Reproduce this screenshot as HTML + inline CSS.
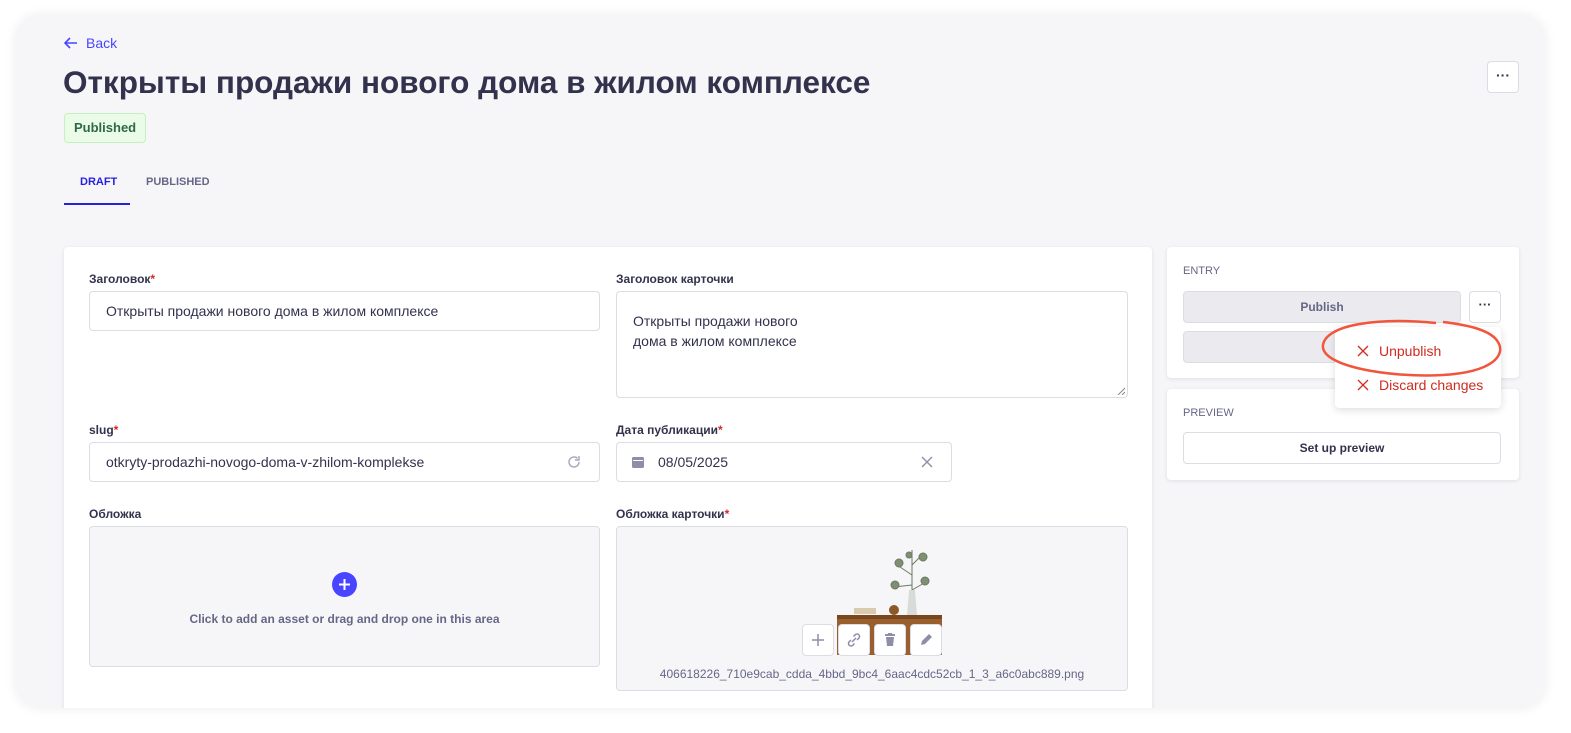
<!DOCTYPE html>
<html><head><meta charset="utf-8"><style>
*{box-sizing:border-box;margin:0;padding:0}
body{width:1571px;height:733px;background:#fff;font-family:"Liberation Sans","DejaVu Sans",sans-serif;color:#32324d;position:relative;overflow:hidden}
.frame{position:absolute;left:16px;top:15px;width:1529px;height:693px;background:#f6f6f9;border-radius:24px;box-shadow:0 0 12px rgba(0,0,0,.08);overflow:hidden}
.abs{position:absolute}
.card{position:absolute;background:#fff;border-radius:4px;box-shadow:0 1px 4px rgba(33,33,52,.1)}
.lbl{position:absolute;font-size:12px;font-weight:bold;color:#32324d}
.lbl b{color:#d02b20}
.inp{position:absolute;background:#fff;border:1px solid #dcdce4;border-radius:4px;font-size:14px;color:#32324d}
.btn{position:absolute;border:1px solid #dcdce4;border-radius:4px;background:#fff;font-size:12px;font-weight:bold;text-align:center}
.ib{position:absolute;width:32px;height:32px;background:#fff;border:1px solid #dcdce4;border-radius:4px;top:97px}
</style></head><body>
<div class="frame">
 <div class="abs" style="left:48px;top:20px;font-size:14px;color:#4945ff">
  <svg width="14" height="12" viewBox="0 0 14 12" style="vertical-align:-1px;margin-right:8px"><path d="M13 6H2M6 1L1 6l5 5" stroke="#4945ff" stroke-width="1.6" fill="none"/></svg>Back</div>
 <div class="abs" style="left:47px;top:49px;font-size:31.5px;font-weight:bold;color:#32324d">Открыты продажи нового дома в жилом комплексе</div>
 <div class="abs" style="left:1471px;top:46px;width:32px;height:32px;background:#fff;border:1px solid #dcdce4;border-radius:4px;text-align:center;font-size:14px;line-height:26px;font-weight:bold">···</div>
 <div class="abs" style="left:48px;top:98px;height:30px;padding:0 9px;background:#eafbe7;border:1px solid #c6f0c2;border-radius:4px;font-size:13px;font-weight:bold;color:#2f6846;line-height:28px">Published</div>
 <div class="abs" style="left:64px;top:161px;font-size:11px;font-weight:bold;color:#271fe0">DRAFT</div>
 <div class="abs" style="left:130px;top:161px;font-size:11px;font-weight:bold;color:#666687">PUBLISHED</div>
 <div class="abs" style="left:48px;top:188px;width:66px;height:2px;background:#271fe0"></div>

 <div class="card" style="left:48px;top:232px;width:1088px;height:500px">
  <div class="lbl" style="left:25px;top:25px">Заголовок<b>*</b></div>
  <div class="inp" style="left:25px;top:44px;width:511px;height:40px;padding:11px 16px">Открыты продажи нового дома в жилом комплексе</div>
  <div class="lbl" style="left:552px;top:25px">Заголовок карточки</div>
  <div class="inp" style="left:552px;top:44px;width:512px;height:107px;padding:19px 16px;line-height:20px">Открыты продажи нового<br>дома в жилом комплексе
   <svg class="abs" style="right:2px;bottom:2px" width="8" height="8"><path d="M1 8L8 1M5 8L8 5" stroke="#888" stroke-width="1"/></svg></div>
  <div class="lbl" style="left:25px;top:176px">slug<b>*</b></div>
  <div class="inp" style="left:25px;top:195px;width:511px;height:40px;padding:11px 16px">otkryty-prodazhi-novogo-doma-v-zhilom-komplekse
   <svg class="abs" style="right:18px;top:12px" width="14" height="14" viewBox="0 0 14 14"><path d="M12 7a5 5 0 1 1-1.5-3.6" stroke="#a5a5ba" stroke-width="1.4" fill="none"/><path d="M12 1v4H8" stroke="#a5a5ba" stroke-width="1.4" fill="none"/></svg></div>
  <div class="lbl" style="left:552px;top:176px">Дата публикации<b>*</b></div>
  <div class="inp" style="left:552px;top:195px;width:336px;height:40px;padding:11px 16px 11px 41px">08/05/2025
   <svg class="abs" style="left:15px;top:13px" width="12" height="12"><rect x="0" y="1" width="12" height="11" rx="1.5" fill="#8e8ea9"/><rect x="1" y="4" width="10" height="1" fill="#fff"/></svg>
   <svg class="abs" style="right:18px;top:13px" width="12" height="12"><path d="M1 1l10 10M11 1L1 11" stroke="#8e8ea9" stroke-width="1.4"/></svg></div>
  <div class="lbl" style="left:25px;top:260px">Обложка</div>
  <div class="inp" style="left:25px;top:279px;width:511px;height:141px;background:#f6f6f9">
   <div class="abs" style="left:242px;top:45px;width:25px;height:25px;border-radius:50%;background:#4945ff"><svg width="25" height="25"><path d="M12.5 7v11M7 12.5h11" stroke="#fff" stroke-width="2"/></svg></div>
   <div class="abs" style="left:0;width:100%;top:85px;text-align:center;font-size:12px;font-weight:bold;color:#666687">Click to add an asset or drag and drop one in this area</div>
  </div>
  <div class="lbl" style="left:552px;top:260px">Обложка карточки<b>*</b></div>
  <div class="inp" style="left:552px;top:279px;width:512px;height:165px;background:#f6f6f9">
   <svg class="abs" style="left:200px;top:18px" width="125" height="110" viewBox="0 0 125 110">
    <g stroke="#6b7a60" stroke-width="1" fill="#7f8f72"><path d="M95 70V5M95 30l-15-10M95 20l12-12M95 40l-18 2M95 45l14-8"/>
    <circle cx="82" cy="18" r="4"/><circle cx="106" cy="12" r="4"/><circle cx="78" cy="40" r="4"/><circle cx="108" cy="36" r="4"/><circle cx="92" cy="10" r="3"/></g>
    <path d="M90 70l2-25h6l2 25z" fill="#d8dcd8"/>
    <rect x="20" y="70" width="118" height="40" fill="#9a5f2e"/><rect x="20" y="70" width="118" height="4" fill="#7a461e"/>
    <rect x="37" y="63" width="22" height="6" fill="#d9cbb0"/><circle cx="77" cy="65" r="5" fill="#8b5a2b"/></svg>
   <div class="ib" style="left:185px"><svg width="30" height="30"><path d="M15 9v12M9 15h12" stroke="#8e8ea9" stroke-width="1.5"/></svg></div>
   <div class="ib" style="left:221px"><svg width="30" height="30"><path d="M13 17l4-4M12 15l-2 2a2.5 2.5 0 0 0 3.5 3.5l2-2M18 15l2-2a2.5 2.5 0 0 0-3.5-3.5l-2 2" stroke="#8e8ea9" stroke-width="1.5" fill="none"/></svg></div>
   <div class="ib" style="left:257px"><svg width="30" height="30"><path d="M10 10h10M13 9h4" stroke="#8e8ea9" stroke-width="2"/><path d="M11 12h8l-1 9h-6z" fill="#8e8ea9"/></svg></div>
   <div class="ib" style="left:293px"><svg width="30" height="30"><path d="M10 20l1-4 7-7 3 3-7 7z" fill="#8e8ea9"/></svg></div>
   <div class="abs" style="left:0;width:100%;top:140px;text-align:center;font-size:12px;color:#666687">406618226_710e9cab_cdda_4bbd_9bc4_6aac4cdc52cb_1_3_a6c0abc889.png</div>
  </div>
 </div>

 <div class="card" style="left:1151px;top:232px;width:352px;height:131px">
  <div class="abs" style="left:16px;top:18px;font-size:11px;color:#666687">ENTRY</div>
  <div class="btn" style="left:16px;top:44px;width:278px;height:32px;background:#eaeaef;color:#666687;line-height:30px">Publish</div>
  <div class="btn" style="left:302px;top:44px;width:32px;height:32px;line-height:26px;font-size:13px">···</div>
  <div class="btn" style="left:16px;top:84px;width:278px;height:32px;background:#eaeaef"></div>
 </div>
 <div class="card" style="left:1151px;top:374px;width:352px;height:91px">
  <div class="abs" style="left:16px;top:18px;font-size:11px;color:#666687">PREVIEW</div>
  <div class="btn" style="left:16px;top:43px;width:318px;height:32px;line-height:30px;color:#32324d">Set up preview</div>
 </div>
 <div class="card" style="left:1319px;top:312px;width:166px;height:81px;box-shadow:0 2px 8px rgba(33,33,52,.15)">
  <div class="abs" style="left:22px;top:16px;font-size:14px;color:#d02b20"><svg width="12" height="12" style="margin-right:10px;vertical-align:-1px"><path d="M1 1l10 10M11 1L1 11" stroke="#d02b20" stroke-width="1.3"/></svg>Unpublish</div>
  <div class="abs" style="left:22px;top:50px;font-size:14px;color:#d02b20"><svg width="12" height="12" style="margin-right:10px;vertical-align:-1px"><path d="M1 1l10 10M11 1L1 11" stroke="#d02b20" stroke-width="1.3"/></svg>Discard changes</div>
 </div>
 <svg class="abs" style="left:1300px;top:300px" width="200" height="80"><path d="M120 8C60 2 10 10 7 30c-3 22 70 33 120 30 50-3 63-20 55-33-7-12-30-17-55-20" stroke="#f1553b" stroke-width="2.5" fill="none"/></svg>
</div>
</body></html>
